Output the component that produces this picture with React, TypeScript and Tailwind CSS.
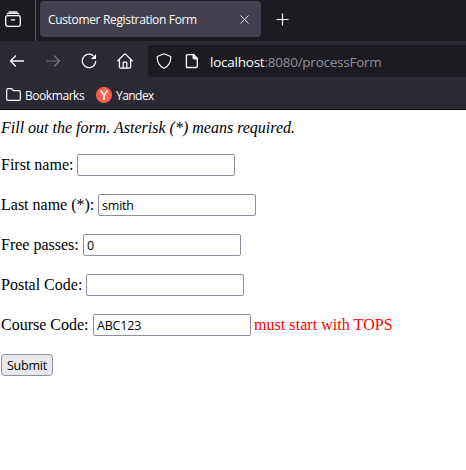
import React from "react";

type FieldProps = {
  label: string;
  value?: string;
  gap: string;
  error?: string;
};

function Field({ label, value = "", gap, error }: FieldProps) {
  return (
    <div className="flex h-[22px] items-start">
      <label className={`shrink-0 whitespace-nowrap pt-[2px] ${gap}`}>{label}</label>
      <input
        defaultValue={value}
        aria-label={label}
        className="h-[22px] w-[158px] shrink-0 rounded-[2px] border border-[#8f8f9d] bg-white px-[3px] pt-[2px] pb-px font-['Open_Sans','Noto_Sans',sans-serif] text-[12.5px] leading-[17px] tracking-[-0.2px] text-black outline-none"
      />
      {error && <span className="ml-[3px] whitespace-nowrap pt-[2px] tracking-[0.05px] text-[#ff0000]">{error}</span>}
    </div>
  );
}

function TabBar() {
  return (
    <div className="flex h-[41px] shrink-0 bg-[#1c1b22]">
      <div className="flex w-[36px] shrink-0 border-r border-[#5b5b66] pt-[11px] pl-[5px]">
        <svg width="16" height="16" viewBox="0 0 16 16" fill="none" stroke="#fbfbfe" strokeWidth="1.3" strokeLinecap="round">
          <path d="M4 .9h8M2.2 3q.2-.6.9-.6h9.8q.7 0 .9.6" strokeWidth="1.1" />
          <rect x=".7" y="4.6" width="14.6" height="10.7" rx="1.8" />
          <path d="M6.3 8.8h3.4" />
        </svg>
      </div>
      <div className="mt-px ml-[4px] flex h-[36px] w-[221px] shrink-0 items-center rounded-[4px] bg-[#42414d] pr-[12px] pl-[8px]">
        <span className="flex-1 whitespace-nowrap pt-px text-[12px] leading-[17px] tracking-[-0.34px]">Customer Registration Form</span>
        <svg width="9" height="9" viewBox="0 0 9 9" stroke="#e0e0e6" strokeWidth="1">
          <path d="m.5.5 8 8m0-8-8 8" />
        </svg>
      </div>
      <svg className="mt-[13px] ml-[15px]" width="13" height="13" viewBox="0 0 13 13" stroke="#fbfbfe" strokeWidth="1.2">
        <path d="M6.5.5v12m-6-6h12" />
      </svg>
    </div>
  );
}

function NavBar() {
  return (
    <div className="flex h-[40px] shrink-0 items-center bg-[#2b2a33]">
      <svg className="ml-[9px]" width="16" height="16" viewBox="0 0 16 16" fill="none" stroke="#fbfbfe" strokeWidth="1.3" strokeLinecap="round" strokeLinejoin="round">
        <path d="M14.5 8H1.5m5-5-5 5 5 5" />
      </svg>
      <svg className="ml-[20px]" width="16" height="16" viewBox="0 0 16 16" fill="none" stroke="#77767f" strokeWidth="1.2" strokeLinecap="round" strokeLinejoin="round">
        <path d="M1.5 8h13m-5-5 5 5-5 5" />
      </svg>
      <svg className="ml-[20px]" width="16" height="16" viewBox="0 0 16 16" fill="none" stroke="#fbfbfe" strokeWidth="1.3" strokeLinecap="round">
        <path d="M11.8 2.4A6.7 6.7 0 1 0 14.7 8.5" />
        <path d="M15 1v5.1h-5.1z" fill="#fbfbfe" stroke="none" />
      </svg>
      <svg className="ml-[20px]" width="16" height="16" viewBox="0 0 16 16" fill="none" stroke="#fbfbfe" strokeWidth="1.3" strokeLinecap="round" strokeLinejoin="round">
        <path d="m.8 7.7 6.4-6.3q.8-.7 1.6 0l6.4 6.3M2.4 6.6v7.1q0 1.4 1.4 1.4h8.4q1.4 0 1.4-1.4V6.6" />
        <path d="M6.2 15V10q0-.8.8-.8h2q.8 0 .8.8v5" />
      </svg>
      <div className="ml-[15px] flex h-[32px] flex-1 items-center rounded-l-[4px] bg-[#1c1b22]">
        <svg className="ml-[8px]" width="16" height="16" viewBox="0 0 16 16" fill="none" stroke="#fbfbfe" strokeWidth="1.2" strokeLinejoin="round">
          <path d="M7.3 1q.7-.3 1.4 0l5.4 2.3q.7.3.7 1C14.8 9.5 12.4 13.1 8.6 15q-.6.3-1.2 0C3.6 13.1 1.2 9.5 1.2 4.3q0-.7.7-1z" />
        </svg>
        <svg className="ml-[12px]" width="16" height="16" viewBox="0 0 16 16" fill="none" stroke="#fbfbfe" strokeWidth="1.3" strokeLinejoin="round">
          <path d="M3.7 1.6h5.8l3.8 3.8v7.8q0 1.3-1.3 1.3H3.7q-1.3 0-1.3-1.3V2.9q0-1.3 1.3-1.3z" />
          <path d="M9.1 1.3v3.2q0 1.3 1.3 1.3h3.1z" fill="#fbfbfe" />
        </svg>
        <span className="ml-[10px] whitespace-nowrap pt-[2px] text-[13.5px] leading-[18px] tracking-[-0.24px] text-[#8f8e98]">
          <span className="text-[#fbfbfe]">localhost</span>:8080/processForm
        </span>
      </div>
    </div>
  );
}

function BookmarksBar() {
  return (
    <div className="flex h-[29px] shrink-0 items-center border-b border-[#0c0c0d] bg-[#2b2a33] text-[12px] leading-[17px]">
      <svg className="ml-[6px]" width="16" height="16" viewBox="0 0 16 16" fill="none" stroke="#fbfbfe" strokeWidth="1.2" strokeLinejoin="round">
        <path d="M.7 12V3q0-1.4 1.4-1.4h3.1q.7 0 1.1.6l.8 1.1q.3.4 1 .4h4.8q1.4 0 1.4 1.4V12q0 1.4-1.4 1.4H2.1Q.7 13.4.7 12z" />
      </svg>
      <span className="ml-[3px] w-[62px] whitespace-nowrap pt-px tracking-[-0.44px]">Bookmarks</span>
      <svg className="ml-[9px]" width="16" height="16" viewBox="0 0 16 16">
        <circle cx="8" cy="8" r="8" fill="#ff604b" />
        <path d="m4.8 3.5 3.2 5 3.2-5M8 8.5v4.7" fill="none" stroke="#fff" strokeWidth="1.6" />
      </svg>
      <span className="ml-[4px] whitespace-nowrap pt-px tracking-[-0.55px]">Yandex</span>
    </div>
  );
}

export default function App() {
  return (
    <div className="flex h-[470px] w-[466px] flex-col overflow-hidden bg-white">
      <header className="font-['Open_Sans','Noto_Sans',sans-serif] text-[#fbfbfe]">
        <TabBar />
        <NavBar />
        <BookmarksBar />
      </header>
      <main className="pl-px font-['Liberation_Serif',serif] text-[16px] leading-[17px] text-black">
        <p className="mt-[9px] italic">Fill out the form. Asterisk (*) means required.</p>
        <form className="mt-[18px] flex flex-col items-start gap-[18px]" onSubmit={(e) => e.preventDefault()}>
          <Field label="First name:" gap="w-[76px]" />
          <Field label="Last name (*):" value="smith" gap="w-[97px]" />
          <Field label="Free passes:" value="0" gap="w-[82px]" />
          <Field label="Postal Code:" gap="w-[85px]" />
          <Field label="Course Code:" value="ABC123" gap="w-[92px]" error="must start with TOPS" />
          <button className="h-[22px] w-[52px] rounded-[4px] border border-[#8f8f9d] bg-[#e9e9ed] pt-[2px] pb-px font-['Open_Sans','Noto_Sans',sans-serif] text-[12.5px] leading-[17px] tracking-[-0.2px]">
            Submit
          </button>
        </form>
      </main>
    </div>
  );
}
